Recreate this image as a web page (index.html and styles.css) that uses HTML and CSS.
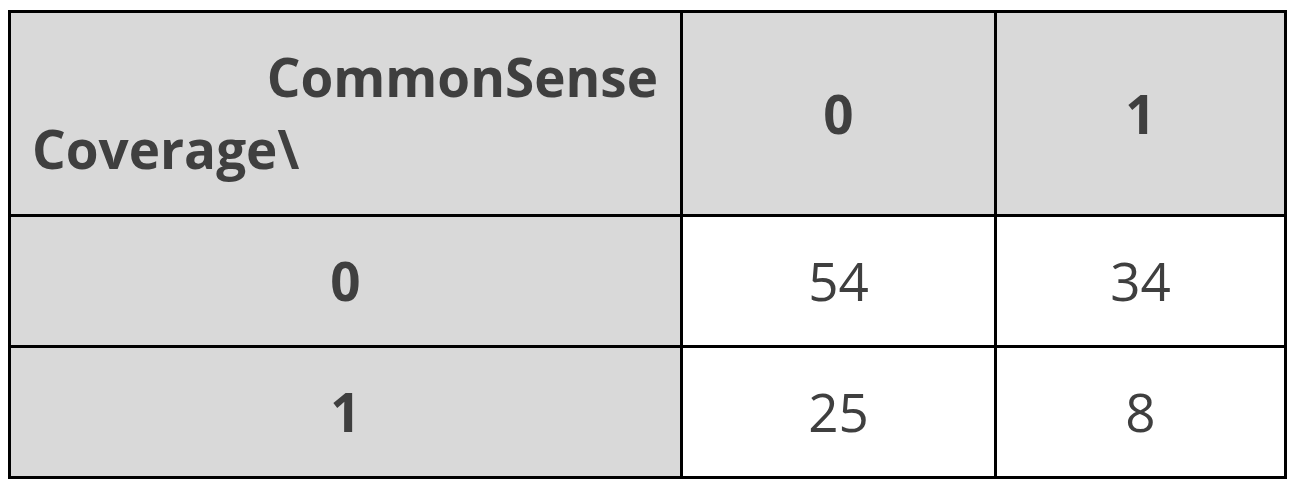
FILE: index.html
```
<!DOCTYPE html>
<html>
<head>
<meta charset="utf-8">
<link rel="stylesheet" href="styles.css">
</head>
<body>
<div class="matrix">
  <div class="cell head corner">
    <div class="corner-top">CommonSense</div>
    <div class="corner-bottom">Coverage\</div>
  </div>
  <div class="cell head">0</div>
  <div class="cell head">1</div>
  <div class="cell head">0</div>
  <div class="cell val">54</div>
  <div class="cell val">34</div>
  <div class="cell head">1</div>
  <div class="cell val">25</div>
  <div class="cell val">8</div>
</div>
</body>
</html>
```
FILE: styles.css
```
html, body {
  margin: 0;
  padding: 0;
  background: #ffffff;
}
body {
  padding: 10px 0 0 8px;
  font-family: "Open Sans", "Liberation Sans", sans-serif;
  color: #3f3f3f;
}
.matrix {
  display: grid;
  grid-template-columns: 669px 311px 287px;
  gap: 3px;
  padding: 3px;
  background: #000000;
  width: max-content;
}
.cell {
  font-size: 53px;
  line-height: 72px;
  padding: 28px 20px;
  display: flex;
  align-items: center;
  justify-content: center;
  background: #ffffff;
}
.head {
  background: #d9d9d9;
  font-weight: 700;
}
.val {
  font-weight: 400;
}
.corner {
  display: block;
  padding: 28px 22px 29px 21px;
}
.corner-top {
  text-align: right;
}
.corner-bottom {
  text-align: left;
}
```
